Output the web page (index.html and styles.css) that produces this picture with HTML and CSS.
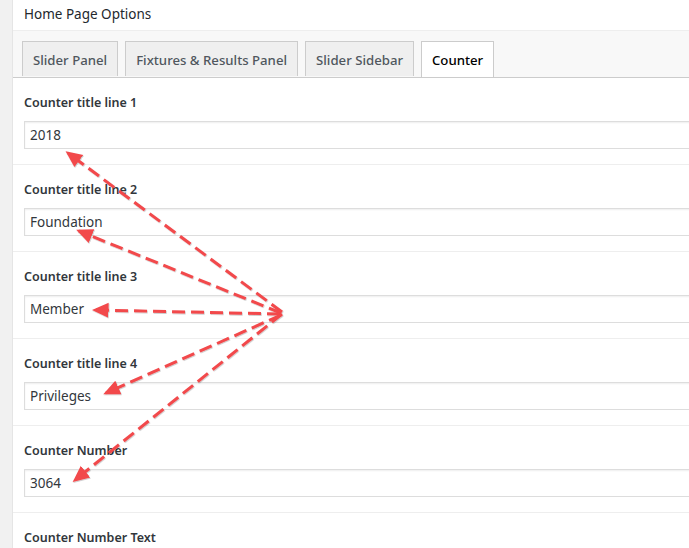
FILE: index.html
```html
<!DOCTYPE html>
<html>
<head>
<meta charset="utf-8">
<link rel="stylesheet" href="styles.css">
</head>
<body>
<div class="page">
  <div class="strip"></div>
  <div class="panel">
    <div class="panel-head">Home Page Options</div>
    <div class="tabs">
      <div class="tab">Slider Panel</div>
      <div class="tab">Fixtures &amp; Results Panel</div>
      <div class="tab">Slider Sidebar</div>
      <div class="tab active">Counter</div>
    </div>
    <div class="fields">
      <div class="row"><div class="label">Counter title line 1</div><div class="input">2018</div></div>
      <div class="row"><div class="label">Counter title line 2</div><div class="input">Foundation</div></div>
      <div class="row"><div class="label">Counter title line 3</div><div class="input">Member</div></div>
      <div class="row"><div class="label">Counter title line 4</div><div class="input">Privileges</div></div>
      <div class="row"><div class="label">Counter Number</div><div class="input">3064</div></div>
      <div class="row"><div class="label">Counter Number Text</div><div class="input"></div></div>
    </div>
  </div>
  <svg class="arrows" width="689" height="548" viewBox="0 0 689 548">
    <defs>
      <marker id="ah" markerWidth="6" markerHeight="6" refX="4.5" refY="3" orient="auto" markerUnits="strokeWidth">
        <path d="M0,0.5 L5.5,3 L0,5.5 Z" fill="#f2484b"/>
      </marker>
      <filter id="sh" x="-10%" y="-10%" width="120%" height="120%">
        <feDropShadow dx="0.6" dy="0.8" stdDeviation="0.6" flood-color="#000" flood-opacity="0.25"/>
      </filter>
    </defs>
    <g stroke="#f2484b" stroke-width="3" stroke-dasharray="13 6" fill="none" stroke-linecap="butt" marker-end="url(#ah)" filter="url(#sh)">
      <line x1="282" y1="312" x2="68" y2="153"/>
      <line x1="281" y1="313" x2="79" y2="231"/>
      <line x1="280" y1="314" x2="95" y2="310"/>
      <line x1="281" y1="315" x2="106" y2="393"/>
      <line x1="282" y1="314" x2="75" y2="480"/>
    </g>
  </svg>
</div>
</body>
</html>
```
FILE: styles.css
```css
html, body {
  margin: 0;
  padding: 0;
  background: #f1f1f1;
  overflow: hidden;
}
.page {
  position: relative;
  width: 689px;
  height: 548px;
  display: flex;
  font-family: "Noto Sans", "Open Sans", sans-serif;
  color: #23282d;
  overflow: hidden;
}
.strip {
  width: 12px;
  flex: none;
  background: #f1f1f1;
}
.panel {
  flex: 1;
  background: #fff;
  border-left: 1px solid #e5e5e5;
  min-width: 0;
}
.panel-head {
  height: 31px;
  box-sizing: border-box;
  padding: 5px 0 0 11px;
  font-size: 13.5px;
  line-height: 18px;
  border-bottom: 1px solid #eeeeee;
}
.tabs {
  background: #f8f8f8;
  display: flex;
  gap: 7px;
  padding: 10px 0 0 9px;
  border-bottom: 1px solid #cccccc;
  height: 36px;
}
.tab {
  border: 1px solid #cccccc;
  border-bottom: none;
  background: #efefef;
  color: #50575e;
  font-size: 13.2px;
  font-weight: 500;
  line-height: 36px;
  padding: 0 10px;
  height: 35px;
  box-sizing: border-box;
  white-space: nowrap;
}
.tab.active {
  background: #fff;
  color: #000;
  height: 36px;
  margin-bottom: -1px;
}
.row {
  padding: 15px 0 15px 11px;
  border-bottom: 1px solid #eeeeee;
}
.label {
  font-size: 12.5px;
  font-weight: 600;
  line-height: 20px;
  color: #32373c;
  margin-bottom: 8px;
}
.input {
  height: 28px;
  box-sizing: border-box;
  border: 1px solid #dddddd;
  border-right: none;
  box-shadow: inset 0 1px 2px rgba(0,0,0,0.07);
  padding: 0 0 0 5px;
  font-size: 13.5px;
  line-height: 27px;
  color: #32373c;
  margin-right: -20px;
}
.arrows {
  position: absolute;
  left: 0;
  top: 0;
  pointer-events: none;
}
```
